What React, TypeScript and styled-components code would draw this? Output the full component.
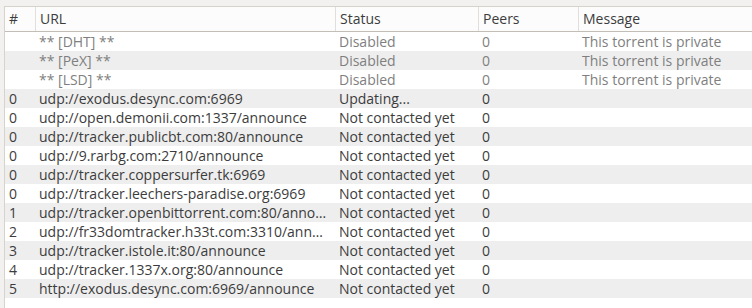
import React from 'react';
import styled, { createGlobalStyle } from 'styled-components';

const GlobalStyle = createGlobalStyle`
  html, body {
    margin: 0;
    padding: 0;
    background: #f2f1f0;
  }
  body {
    font-family: "Open Sans", "Noto Sans", sans-serif;
  }
`;

interface Tracker {
  tier: string;
  url: string;
  status: string;
  peers: string;
  message: string;
  special?: boolean;
}

const trackers: Tracker[] = [
  { tier: '', url: '** [DHT] **', status: 'Disabled', peers: '0', message: 'This torrent is private', special: true },
  { tier: '', url: '** [PeX] **', status: 'Disabled', peers: '0', message: 'This torrent is private', special: true },
  { tier: '', url: '** [LSD] **', status: 'Disabled', peers: '0', message: 'This torrent is private', special: true },
  { tier: '0', url: 'udp://exodus.desync.com:6969', status: 'Updating...', peers: '0', message: '' },
  { tier: '0', url: 'udp://open.demonii.com:1337/announce', status: 'Not contacted yet', peers: '0', message: '' },
  { tier: '0', url: 'udp://tracker.publicbt.com:80/announce', status: 'Not contacted yet', peers: '0', message: '' },
  { tier: '0', url: 'udp://9.rarbg.com:2710/announce', status: 'Not contacted yet', peers: '0', message: '' },
  { tier: '0', url: 'udp://tracker.coppersurfer.tk:6969', status: 'Not contacted yet', peers: '0', message: '' },
  { tier: '0', url: 'udp://tracker.leechers-paradise.org:6969', status: 'Not contacted yet', peers: '0', message: '' },
  { tier: '1', url: 'udp://tracker.openbittorrent.com:80/announce', status: 'Not contacted yet', peers: '0', message: '' },
  { tier: '2', url: 'udp://fr33domtracker.h33t.com:3310/announce', status: 'Not contacted yet', peers: '0', message: '' },
  { tier: '3', url: 'udp://tracker.istole.it:80/announce', status: 'Not contacted yet', peers: '0', message: '' },
  { tier: '4', url: 'udp://tracker.1337x.org:80/announce', status: 'Not contacted yet', peers: '0', message: '' },
  { tier: '5', url: 'http://exodus.desync.com:6969/announce', status: 'Not contacted yet', peers: '0', message: '' },
];

const columns = [
  { title: '#', width: 30 },
  { title: 'URL', width: 300 },
  { title: 'Status', width: 143 },
  { title: 'Peers', width: 100 },
  { title: 'Message', width: 175 },
];

const gridTemplate = columns.map((c) => `${c.width}px`).join(' ');

const App: React.FC = () => {
  return (
    <>
      <GlobalStyle />
      <Page>
        <TrackerList>
          <HeaderRow>
            {columns.map((col) => (
              <HeaderCell key={col.title}>{col.title}</HeaderCell>
            ))}
          </HeaderRow>
          {trackers.map((t, index) => (
            <Row key={index} $alt={index % 2 === 1} $dim={!!t.special}>
              <Cell>{t.tier}</Cell>
              <Cell>{t.url}</Cell>
              <Cell>{t.status}</Cell>
              <Cell>{t.peers}</Cell>
              <Cell>{t.message}</Cell>
            </Row>
          ))}
        </TrackerList>
      </Page>
    </>
  );
};

const Page = styled.div`
  width: 752px;
  height: 308px;
  padding: 6px 0 0 4px;
  box-sizing: border-box;
  overflow: hidden;
`;

const TrackerList = styled.div`
  height: 100%;
  background: #ffffff;
  border-top: 1px solid #d6d2cc;
  border-left: 1px solid #d6d2cc;
  font-size: 14px;
`;

const HeaderRow = styled.div`
  display: grid;
  grid-template-columns: ${gridTemplate};
  height: 24px;
  border-bottom: 1px solid #c2bdb6;
  background: #fcfcfc;
`;

const HeaderCell = styled.div`
  padding-left: 4px;
  line-height: 24px;
  color: #3c3c3c;
  border-left: 1px solid #e2dfdb;
  white-space: nowrap;
  overflow: hidden;

  &:first-child {
    border-left: none;
  }
`;

const Row = styled.div<{ $alt: boolean; $dim: boolean }>`
  display: grid;
  grid-template-columns: ${gridTemplate};
  height: 19px;
  line-height: 19px;
  background: ${(p) => (p.$alt ? '#eeeeee' : '#ffffff')};
  color: ${(p) => (p.$dim ? '#7f7f7f' : '#3c3c3c')};
`;

const Cell = styled.div`
  padding: 0 4px;
  min-width: 0;
  overflow: hidden;
  white-space: nowrap;
  text-overflow: ellipsis;
`;

export default App;
